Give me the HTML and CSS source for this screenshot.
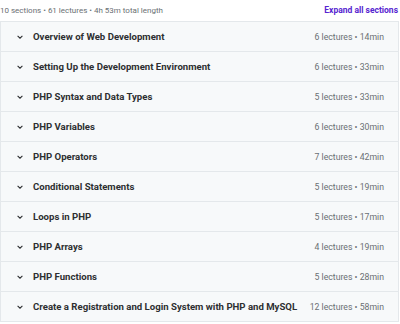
FILE: index.html
```html
<!DOCTYPE html>
<html lang="en">
<head>
    <meta charset="UTF-8">
    <title>Course content</title>
    <link rel="stylesheet" href="styles.css">
</head>
<body>
    <div class="curriculum">
        <div class="summary">
            <span class="totals">10 sections • 61 lectures • 4h 53m total length</span>
            <button class="expand-all">Expand all sections</button>
        </div>

        <div class="sections">
            <div class="section">
                <span class="chevron"><svg viewBox="0 0 10 10" width="8" height="8"><path d="M2 3.5 L5 6.5 L8 3.5" fill="none" stroke="currentColor" stroke-width="1.3"/></svg></span>
                <span class="title">Overview of Web Development</span>
                <span class="meta">6 lectures • 14min</span>
            </div>
            <div class="section">
                <span class="chevron"><svg viewBox="0 0 10 10" width="8" height="8"><path d="M2 3.5 L5 6.5 L8 3.5" fill="none" stroke="currentColor" stroke-width="1.3"/></svg></span>
                <span class="title">Setting Up the Development Environment</span>
                <span class="meta">6 lectures • 33min</span>
            </div>
            <div class="section">
                <span class="chevron"><svg viewBox="0 0 10 10" width="8" height="8"><path d="M2 3.5 L5 6.5 L8 3.5" fill="none" stroke="currentColor" stroke-width="1.3"/></svg></span>
                <span class="title">PHP Syntax and Data Types</span>
                <span class="meta">5 lectures • 33min</span>
            </div>
            <div class="section">
                <span class="chevron"><svg viewBox="0 0 10 10" width="8" height="8"><path d="M2 3.5 L5 6.5 L8 3.5" fill="none" stroke="currentColor" stroke-width="1.3"/></svg></span>
                <span class="title">PHP Variables</span>
                <span class="meta">6 lectures • 30min</span>
            </div>
            <div class="section">
                <span class="chevron"><svg viewBox="0 0 10 10" width="8" height="8"><path d="M2 3.5 L5 6.5 L8 3.5" fill="none" stroke="currentColor" stroke-width="1.3"/></svg></span>
                <span class="title">PHP Operators</span>
                <span class="meta">7 lectures • 42min</span>
            </div>
            <div class="section">
                <span class="chevron"><svg viewBox="0 0 10 10" width="8" height="8"><path d="M2 3.5 L5 6.5 L8 3.5" fill="none" stroke="currentColor" stroke-width="1.3"/></svg></span>
                <span class="title">Conditional Statements</span>
                <span class="meta">5 lectures • 19min</span>
            </div>
            <div class="section">
                <span class="chevron"><svg viewBox="0 0 10 10" width="8" height="8"><path d="M2 3.5 L5 6.5 L8 3.5" fill="none" stroke="currentColor" stroke-width="1.3"/></svg></span>
                <span class="title">Loops in PHP</span>
                <span class="meta">5 lectures • 17min</span>
            </div>
            <div class="section">
                <span class="chevron"><svg viewBox="0 0 10 10" width="8" height="8"><path d="M2 3.5 L5 6.5 L8 3.5" fill="none" stroke="currentColor" stroke-width="1.3"/></svg></span>
                <span class="title">PHP Arrays</span>
                <span class="meta">4 lectures • 19min</span>
            </div>
            <div class="section">
                <span class="chevron"><svg viewBox="0 0 10 10" width="8" height="8"><path d="M2 3.5 L5 6.5 L8 3.5" fill="none" stroke="currentColor" stroke-width="1.3"/></svg></span>
                <span class="title">PHP Functions</span>
                <span class="meta">5 lectures • 28min</span>
            </div>
            <div class="section">
                <span class="chevron"><svg viewBox="0 0 10 10" width="8" height="8"><path d="M2 3.5 L5 6.5 L8 3.5" fill="none" stroke="currentColor" stroke-width="1.3"/></svg></span>
                <span class="title">Create a Registration and Login System with PHP and MySQL</span>
                <span class="meta">12 lectures • 58min</span>
            </div>
        </div>
    </div>
</body>
</html>
```

FILE: styles.css
```css
body {
    margin: 0;
    background: #fff;
    font-family: Roboto, "Liberation Sans", sans-serif;
    color: #2d2f31;
}

.curriculum {
    width: 399px;
}

.summary {
    display: flex;
    justify-content: space-between;
    align-items: center;
    height: 20px;
}

.totals {
    font-size: 8px;
    color: #6a6f73;
}

.expand-all {
    background: none;
    border: none;
    padding: 0 1px 0 0;
    font-family: inherit;
    font-size: 8.5px;
    font-weight: 700;
    color: #5624d0;
    cursor: pointer;
}

.sections {
    margin-top: 1px;
    border: 1px solid #e4e8eb;
}

.section {
    display: flex;
    align-items: center;
    height: 29px;
    background: #f7f9fa;
    border-top: 1px solid #e4e8eb;
    padding: 0 14px 0 15px;
}

.section:first-child {
    border-top: none;
}

.chevron {
    display: flex;
    width: 17px;
    color: #2d2f31;
}

.title {
    flex: 1;
    font-size: 9.6px;
    font-weight: 700;
    color: #2d2f31;
}

.meta {
    font-size: 8.7px;
    color: #6a6f73;
}
```
